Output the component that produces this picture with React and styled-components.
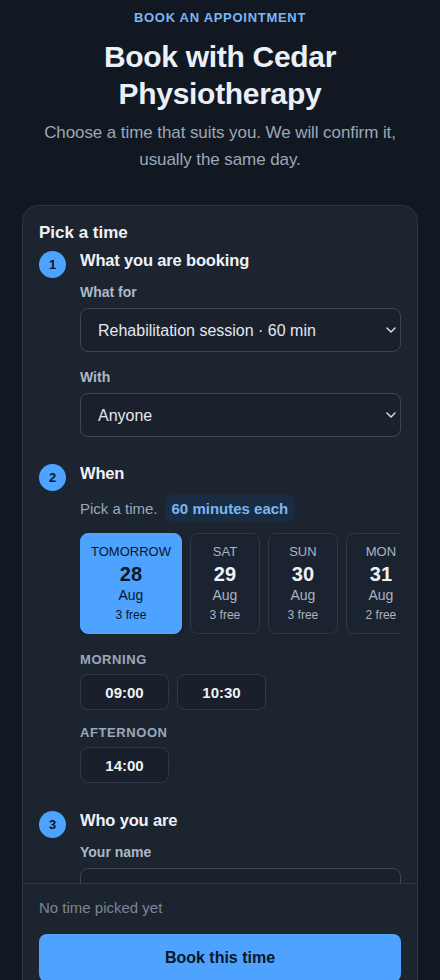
import React, { useState } from 'react';
import styled, { createGlobalStyle } from 'styled-components';

const GlobalStyle = createGlobalStyle`
  * { box-sizing: border-box; }
  body {
    margin: 0;
    background: #121821;
    color: #e8eef6;
    font-family: "Liberation Sans", Arial, sans-serif;
  }
`;

const Page = styled.main`
  padding: 10px 22px 24px;
`;

const Header = styled.header`
  text-align: center;
`;

const Eyebrow = styled.p`
  margin: 0;
  font-size: 13px;
  line-height: 16px;
  font-weight: 700;
  letter-spacing: 0.055em;
  color: #7ab7f5;
`;

const Title = styled.h1`
  margin: 12px 0 0;
  font-size: 30px;
  line-height: 37px;
  font-weight: 700;
  letter-spacing: -0.01em;
  color: #e9f0f9;
`;

const Lead = styled.p`
  margin: 7px 0 0;
  font-size: 17px;
  line-height: 27px;
  letter-spacing: -0.005em;
  color: #9ba8b8;
`;

const Card = styled.section`
  margin-top: 32px;
  height: 794px;
  display: flex;
  flex-direction: column;
  background: #1c2430;
  border: 1px solid #2a3443;
  border-radius: 16px;
  overflow: hidden;
`;

const CardBody = styled.div`
  flex: 1;
  min-height: 0;
  overflow-y: auto;
  padding: 16px 16px 24px;
  scrollbar-width: none;
  &::-webkit-scrollbar { display: none; }
`;

const CardTitle = styled.h2`
  margin: 0 0 5px;
  font-size: 17px;
  line-height: 22px;
  font-weight: 700;
  color: #eef2f7;
`;

const Step = styled.div`
  display: grid;
  grid-template-columns: 27px 1fr;
  column-gap: 14px;
  margin-top: ${({ $gap }) => $gap || 0}px;
`;

const StepNo = styled.span`
  width: 27px;
  height: 27px;
  margin-top: 2px;
  border-radius: 50%;
  background: #4da3ff;
  color: #0b1626;
  font-size: 13px;
  font-weight: 700;
  display: flex;
  align-items: center;
  justify-content: center;
`;

const StepContent = styled.div`
  min-width: 0;
`;

const StepTitle = styled.h3`
  margin: 0;
  font-size: 16.5px;
  line-height: 22px;
  font-weight: 700;
  letter-spacing: -0.01em;
  color: #eef2f7;
`;

const Field = styled.div`
  margin-top: ${({ $gap }) => $gap || 12}px;
  display: flex;
  flex-direction: column;
  gap: 7px;
`;

const Label = styled.label`
  font-size: 14px;
  line-height: 18px;
  font-weight: 700;
  color: #aeb8c6;
`;

const SelectWrap = styled.div`
  position: relative;

  svg {
    position: absolute;
    right: 5px;
    top: 50%;
    transform: translateY(-50%);
    pointer-events: none;
  }
`;

const Select = styled.select`
  appearance: none;
  width: 100%;
  height: 44px;
  padding: 0 24px 0 17px;
  background: #1a212c;
  border: 1px solid #3a4759;
  border-radius: 8px;
  color: #e2e8f0;
  font-family: inherit;
  font-size: 16px;
`;

const Input = styled.input`
  width: 100%;
  height: 44px;
  padding: 0 16px;
  background: #1a212c;
  border: 1px solid #3a4759;
  border-radius: 8px;
  color: #e2e8f0;
  font-family: inherit;
  font-size: 16px;
`;

const Hint = styled.div`
  margin-top: 11px;
  display: flex;
  align-items: center;
  gap: 7px;
  font-size: 15px;
  color: #9ba8b8;
`;

const Badge = styled.span`
  padding: 0 7px;
  height: 26px;
  display: inline-flex;
  align-items: center;
  border-radius: 6px;
  background: #1a2c42;
  color: #79b6f3;
  font-weight: 700;
`;

const DateStrip = styled.div`
  margin-top: 12px;
  display: flex;
  gap: 8px;
  overflow-x: auto;
  scrollbar-width: none;
  &::-webkit-scrollbar { display: none; }
`;

const DateCard = styled.button`
  flex: 0 0 auto;
  min-width: 70px;
  padding: 10px 10px;
  border-radius: 8px;
  border: 1px solid ${({ $active }) => ($active ? '#4da3ff' : '#2e3847')};
  background: ${({ $active }) => ($active ? '#4da3ff' : '#1b2330')};
  box-shadow: ${({ $active }) => ($active ? '0 2px 6px rgba(0,0,0,0.3)' : 'none')};
  color: ${({ $active }) => ($active ? '#0b1626' : '#aab4c2')};
  font-family: inherit;
  display: flex;
  flex-direction: column;
  align-items: center;
  cursor: pointer;
`;

const Day = styled.span`
  font-size: 13px;
  line-height: 15px;
`;

const DayNum = styled.span`
  margin-top: 3px;
  font-size: 20px;
  line-height: 24px;
  font-weight: 700;
  color: ${({ $active }) => ($active ? '#0b1626' : '#eef2f7')};
`;

const Month = styled.span`
  font-size: 14px;
  line-height: 18px;
`;

const Free = styled.span`
  margin-top: 3px;
  font-size: 12px;
  line-height: 16px;
`;

const Period = styled.div`
  margin-top: ${({ $gap }) => $gap}px;
  font-size: 13px;
  line-height: 16px;
  font-weight: 700;
  letter-spacing: 0.045em;
  color: #9ba8b8;
`;

const Slots = styled.div`
  margin-top: 6px;
  display: flex;
  gap: 8px;
`;

const Slot = styled.button`
  min-width: 89px;
  height: 36px;
  padding: 0 16px;
  border-radius: 8px;
  border: 1px solid #2e3847;
  background: #19202b;
  color: #eef2f7;
  font-family: inherit;
  font-size: 15px;
  font-weight: 700;
  cursor: pointer;
`;

const Footer = styled.footer`
  flex: none;
  padding: 14px 16px 16px;
  background: #1c2430;
  border-top: 1px solid #2c3747;
`;

const Status = styled.p`
  margin: 0;
  font-size: 15px;
  line-height: 20px;
  color: #7b8696;
`;

const Submit = styled.button`
  margin-top: 16px;
  width: 100%;
  height: 48px;
  border: none;
  border-radius: 8px;
  background: #4da3ff;
  color: #0b1626;
  font-family: inherit;
  font-size: 16px;
  font-weight: 700;
  cursor: pointer;
`;

const Chevron = () => (
  <svg width="10" height="6" viewBox="0 0 10 6" fill="none">
    <path d="M1 1l4 4 4-4" stroke="#d3d9e1" strokeWidth="1.5" strokeLinecap="round" strokeLinejoin="round" />
  </svg>
);

const days = [
  { name: 'TOMORROW', num: 28, free: 3 },
  { name: 'SAT', num: 29, free: 3 },
  { name: 'SUN', num: 30, free: 3 },
  { name: 'MON', num: 31, free: 2 },
  { name: 'TUE', num: 1, free: 4, month: 'Sep' },
];

export default function App() {
  const [day, setDay] = useState(0);

  return (
    <>
      <GlobalStyle />
      <Page>
        <Header>
          <Eyebrow>BOOK AN APPOINTMENT</Eyebrow>
          <Title>Book with Cedar Physiotherapy</Title>
          <Lead>Choose a time that suits you. We will confirm it, usually the same day.</Lead>
        </Header>

        <Card>
          <CardBody>
            <CardTitle>Pick a time</CardTitle>

            <Step>
              <StepNo>1</StepNo>
              <StepContent>
                <StepTitle>What you are booking</StepTitle>
                <Field>
                  <Label>What for</Label>
                  <SelectWrap>
                    <Select defaultValue="rehab">
                      <option value="rehab">Rehabilitation session · 60 min</option>
                      <option value="assess">First assessment · 45 min</option>
                    </Select>
                    <Chevron />
                  </SelectWrap>
                </Field>
                <Field $gap={16}>
                  <Label>With</Label>
                  <SelectWrap>
                    <Select defaultValue="any">
                      <option value="any">Anyone</option>
                    </Select>
                    <Chevron />
                  </SelectWrap>
                </Field>
              </StepContent>
            </Step>

            <Step $gap={25}>
              <StepNo>2</StepNo>
              <StepContent>
                <StepTitle>When</StepTitle>
                <Hint>
                  Pick a time.
                  <Badge>60 minutes each</Badge>
                </Hint>
                <DateStrip>
                  {days.map((d, i) => (
                    <DateCard key={d.name} $active={i === day} onClick={() => setDay(i)}>
                      <Day>{d.name}</Day>
                      <DayNum $active={i === day}>{d.num}</DayNum>
                      <Month>{d.month || 'Aug'}</Month>
                      <Free>{d.free} free</Free>
                    </DateCard>
                  ))}
                </DateStrip>
                <Period $gap={18}>MORNING</Period>
                <Slots>
                  <Slot>09:00</Slot>
                  <Slot>10:30</Slot>
                </Slots>
                <Period $gap={15}>AFTERNOON</Period>
                <Slots>
                  <Slot>14:00</Slot>
                </Slots>
              </StepContent>
            </Step>

            <Step $gap={26}>
              <StepNo>3</StepNo>
              <StepContent>
                <StepTitle>Who you are</StepTitle>
                <Field>
                  <Label>Your name</Label>
                  <Input type="text" />
                </Field>
                <Field $gap={16}>
                  <Label>Phone</Label>
                  <Input type="tel" />
                </Field>
                <Field $gap={16}>
                  <Label>Email</Label>
                  <Input type="email" />
                </Field>
              </StepContent>
            </Step>
          </CardBody>

          <Footer>
            <Status>No time picked yet</Status>
            <Submit>Book this time</Submit>
          </Footer>
        </Card>
      </Page>
    </>
  );
}
